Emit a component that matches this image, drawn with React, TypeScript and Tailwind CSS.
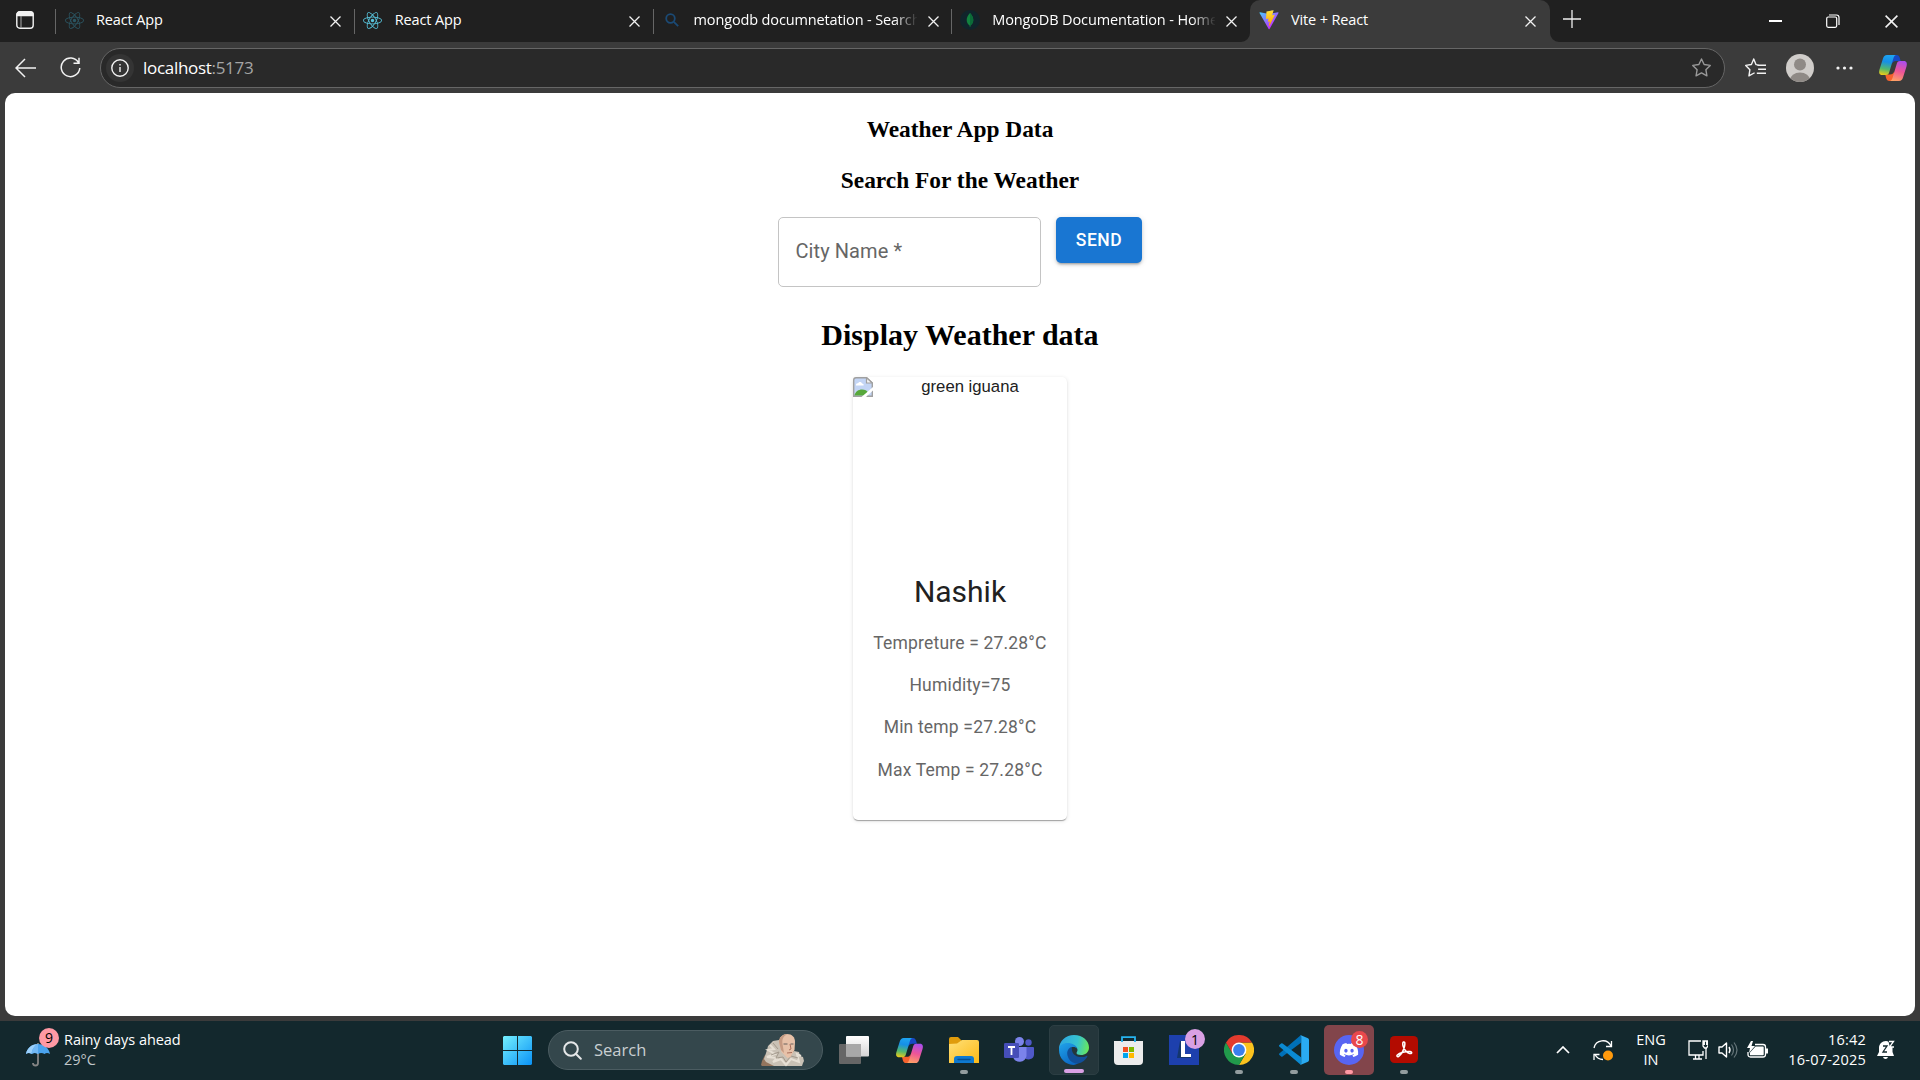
import React from "react";
import { FaDiscord, FaReact } from "react-icons/fa";

const ui = "font-['Open_Sans',sans-serif]";

function Cross({ size = 11 }: { size?: number }) {
  return (
    <svg width={size} height={size} viewBox="0 0 11 11" fill="none" stroke="#f2f2f2" strokeWidth="1.3">
      <path d="M.5.5l10 10M10.5.5l-10 10" />
    </svg>
  );
}

function SearchFavicon() {
  return (
    <svg width="16" height="16" viewBox="0 0 16 16" fill="none" stroke="#1b4a75" strokeWidth="1.8">
      <circle cx="6.5" cy="6.5" r="4.3" />
      <path d="M9.8 9.8l4.4 4.4" />
    </svg>
  );
}

function MongoFavicon() {
  return (
    <svg width="20" height="20" viewBox="0 0 20 20">
      <circle cx="10" cy="10" r="10" fill="#10242b" />
      <path d="M10 3c2.2 2.3 3.3 4.500 3.300 7 0 2.600-1.200 4.200-2.900 5.500L10.200 17h-.4l-.2-1.500C7.900 14.200 6.700 12.600 6.700 10 6.700 7.500 7.800 5.300 10 3z" fill="#12823f" />
      <path d="M10 3v14h.2l.2-1.500c1.700-1.300 2.900-2.900 2.900-5.500 0-2.500-1.100-4.700-3.300-7z" fill="#0b6b38" />
    </svg>
  );
}

function ViteFavicon() {
  return (
    <svg width="20" height="20" viewBox="0 0 410 404">
      <defs>
        <linearGradient id="va" x1="6" y1="33" x2="235" y2="344" gradientUnits="userSpaceOnUse">
          <stop stopColor="#41D1FF" />
          <stop offset="1" stopColor="#BD34FE" />
        </linearGradient>
        <linearGradient id="vb" x1="194" y1="9" x2="236" y2="293" gradientUnits="userSpaceOnUse">
          <stop stopColor="#FFEA83" />
          <stop offset=".08" stopColor="#FFDD35" />
          <stop offset="1" stopColor="#FFA800" />
        </linearGradient>
      </defs>
      <path d="M399.600 59.500L215.600 388.500c-3.800 6.800-13.600 6.800-17.400.1L10.600 59.600c-4.200-7.300 2.100-16.200 10.400-14.700l184.200 32.900c1.200.2 2.400.2 3.500 0l180.400-32.900c8.300-1.500 14.600 7.300 10.500 14.600z" fill="url(#va)" />
      <path d="M292.900 1.600L156.800 28.200c-2.200.4-3.900 2.300-4 4.600l-8.400 141.300c-.2 3.300 2.900 5.900 6.100 5.200l37.900-8.700c3.500-.8 6.700 2.300 6 5.900l-11.300 55.100c-.8 3.700 2.700 6.900 6.300 5.800l23.400-7.100c3.600-1.100 7.100 2.100 6.300 5.800l-17.900 86.600c-1.100 5.400 6.100 8.400 9.100 3.700l2-3.100 110.900-221.400c1.900-3.700-1.300-7.900-5.400-7.200l-39 7.500c-3.700.7-6.800-2.700-5.700-6.300l25.500-88.200c1-3.700-2-7.100-5.700-6.400z" fill="url(#vb)" />
    </svg>
  );
}

function Copilot({ id, size }: { id: string; size: number }) {
  return (
    <svg width={size} height={size} viewBox="0 0 30 30">
      <defs>
        <linearGradient id={id + "a"} x1="8" y1="1" x2="4" y2="22" gradientUnits="userSpaceOnUse">
          <stop stopColor="#1ea6f2" />
          <stop offset=".35" stopColor="#168fe8" />
          <stop offset=".7" stopColor="#54b96b" />
          <stop offset="1" stopColor="#f5cc14" />
        </linearGradient>
        <linearGradient id={id + "b"} x1="25" y1="8" x2="19" y2="29" gradientUnits="userSpaceOnUse">
          <stop stopColor="#a84df0" />
          <stop offset=".5" stopColor="#ee5597" />
          <stop offset="1" stopColor="#ffa463" />
        </linearGradient>
      </defs>
      <path d="M14 2h4.500c2 0 2.700 1.200 3.300 3l.9 3h-4.500c-2.400 0-3.700 1-4.400 3z" fill="#1748c4" />
      <path d="M16 28h-4.500c-2 0-2.800-1.200-3.400-3l-.9-3.500H12c2.200 0 3.500-1 4.200-3z" fill="#f5622d" />
      <path d="M9 2h9.300c-1.600.3-2.300 1.400-2.800 3l-4.200 14c-.5 1.700-1.300 3-3.300 3H4.300C1 22 .7 19.300 1.500 16.500L5 5.500C5.700 3.300 6.800 2 9 2z" fill={`url(#${id}a)`} />
      <path d="M21 28h-9.300c1.600-.3 2.300-1.400 2.800-3l4.200-14c.5-1.700 1.300-3 3.300-3h3.700c3.300 0 3.600 2.700 2.800 5.500L25 24.500c-.7 2.200-1.800 3.500-4 3.500z" fill={`url(#${id}b)`} />
    </svg>
  );
}

function Tab({ icon, title, active, divider }: { icon: React.ReactNode; title: string; active?: boolean; divider?: boolean }) {
  return (
    <div className={"relative flex h-[42px] shrink-0 items-center " + (active ? "w-[300px] rounded-t-[10px] bg-[#3b3b3b]" : "w-[298.750px]")}>
      {divider && <span className="absolute left-0 top-[9px] h-[25px] w-px bg-[#666]" />}
      {active && (
        <>
          <svg className="absolute -left-[9px] bottom-0" width="9" height="9"><path d="M9 0v9H0a9 9 0 0 0 9-9z" fill="#3b3b3b" /></svg>
          <svg className="absolute -right-[9px] bottom-0" width="9" height="9"><path d="M0 0v9h9a9 9 0 0 1-9-9z" fill="#3b3b3b" /></svg>
        </>
      )}
      <span className="ml-[9px] flex w-5 items-center justify-center pb-[2px]">{icon}</span>
      <span className={"ml-3 w-[223px] overflow-hidden whitespace-nowrap pb-[2px] text-[14.500px] leading-5 tracking-[-0.130px] text-white " + ui}
        style={title.length > 20 ? { maskImage: "linear-gradient(90deg,#000 200px,transparent 224px)" } : undefined}>
        {title}
      </span>
      <span className="ml-[11px] flex"><Cross /></span>
    </div>
  );
}

function Slot({ children, dot, tile }: { children: React.ReactNode; dot?: string; tile?: string }) {
  return (
    <div className="flex w-[55px] justify-center">
      <div className={"relative flex h-[50px] w-[50px] items-center justify-center rounded-[5px] " + (tile || "")}>
        {children}
        {dot && <span className={"absolute bottom-[1px] h-1 rounded-full " + dot} />}
      </div>
    </div>
  );
}

function WindowsLogo() {
  return (
    <svg width="29" height="29" viewBox="0 0 30 30">
      <defs>
        <linearGradient id="wn" x1="0" y1="0" x2="1" y2="1">
          <stop stopColor="#74f0ff" /><stop offset="1" stopColor="#0a92f5" />
        </linearGradient>
      </defs>
      <path d="M1 0h13.500v14.500H0V1zM15.500 0H29l1 1v13.500H15.500zM0 15.500h14.500V30H1l-1-1zM15.500 15.500H30V29l-1 1H15.500z" fill="url(#wn)" />
    </svg>
  );
}

function Portrait() {
  return (
    <svg width="44" height="34" viewBox="0 0 44 34">
      <path d="M0 32l1-4 3-6 8 2 4 9H1z" fill="#94755e" />
      <path d="M4 23l2-6 1-4 5-5 6-1 4 3 6 14 5-6 5 1 1 4 3 1 1 4-1 2-1 3H13L5 29l-2-3z" fill="#c9c1b5" />
      <path d="M9 12l4 4-6 1 7 4-8 3 10 1-4 4 8-3 5 6 5-6 8 3-2-8 4 2" fill="none" stroke="#e6dfd4" strokeWidth="2" />
      <path d="M10 22l8-3-3 6 7-1 3 5 5-6 7 2M12 10l5 6" fill="none" stroke="#a3998c" strokeWidth="1" />
      <path d="M18 9c0-5 4-8 8-8 5 0 8 3 8 8l-.5 8-4 7-3 1-6-6-1.500-5z" fill="#e7c1a8" />
      <path d="M18 9c0-5 4-8 9-8-5 2-6 5-5.500 10l1.500 9-3-3z" fill="#c59a82" />
      <path d="M22.500 11h4m3 0h3" stroke="#6b625c" strokeWidth="1.200" />
      <path d="M29 11l1 5-2 1M26 20l5-.5" stroke="#a96f5b" strokeWidth="1" fill="none" />
    </svg>
  );
}

function TaskView() {
  return (
    <svg width="30" height="28" viewBox="0 0 30 28">
      <defs><linearGradient id="tv" x1="0" y1="0" x2="0" y2="1"><stop stopColor="#fff" /><stop offset="1" stopColor="#d5d5d5" /></linearGradient></defs>
      <rect y="8" width="22" height="20" rx="1" fill="#666" />
      <rect x="7" width="23" height="20.500" rx="1" fill="url(#tv)" />
      <path d="M7 8h15v12.500H7z" fill="#a8a8a8" />
    </svg>
  );
}

function Explorer() {
  return (
    <svg width="30" height="27" viewBox="0 0 30 27">
      <defs><linearGradient id="fe" x1="0" y1="0" x2="1" y2="1"><stop stopColor="#ffe078" /><stop offset="1" stopColor="#fcb916" /></linearGradient></defs>
      <path d="M0 2Q0 0 2 0h7l4 4h-1v5H0z" fill="#e09c0c" />
      <path d="M0 7l8-.500L13 3h15q2 0 2 2v21H0z" fill="url(#fe)" />
      <path d="M5 26v-4q0-3 3-3h14q3 0 3 3v4z" fill="#0e79d0" />
      <path d="M9 22.500h12" stroke="#064f91" strokeWidth="1.300" strokeLinecap="round" />
    </svg>
  );
}

function Teams() {
  return (
    <svg width="30" height="27" viewBox="0 0 30 27">
      <circle cx="24.500" cy="5.500" r="3.200" fill="#5059c9" />
      <path d="M20 10h9q1 0 1 1v7a5.500 5.500 0 0 1-10 2z" fill="#5059c9" />
      <circle cx="15.500" cy="4.500" r="4.500" fill="#7b83eb" />
      <path d="M9 10h13.500v9a7 7 0 0 1-13.500 1z" fill="#7b83eb" />
      <rect y="6" width="15" height="15" rx="1.300" fill="#464eb8" />
      <path d="M4 10h7M7.500 10v8" stroke="#fff" strokeWidth="1.800" />
    </svg>
  );
}

function Edge() {
  return (
    <svg width="30" height="30" viewBox="0 0 30 30">
      <defs>
        <linearGradient id="eg1" x1="2" y1="8" x2="30" y2="14" gradientUnits="userSpaceOnUse"><stop stopColor="#2ea9e0" /><stop offset=".55" stopColor="#36c3d0" /><stop offset="1" stopColor="#6bea55" /></linearGradient>
        <linearGradient id="eg2" x1="2" y1="10" x2="14" y2="30" gradientUnits="userSpaceOnUse"><stop stopColor="#1e9de6" /><stop offset="1" stopColor="#0b65c2" /></linearGradient>
      </defs>
      <path d="M0 14C0 6 7 0 15 0c9 0 15 6 15 12.500 0 5-4 7.500-8 7.500-3 0-4.500-1-4.500-2 0-.8 1-1.300 1-3 0-2.500-2.500-5-6.500-5-5 0-10 2.500-12 4z" fill="url(#eg1)" />
      <path d="M0 15c0-5 4-7 8.500-7 5 0 9 2.500 9.800 6-1-1.500-2.500-2-4-2-3 0-4.500 2.500-4.500 5.500 0 6 5 10 10 10-1.500 1.500-3.500 2.500-5.500 2.500C6 29.500 0 23 0 15z" fill="url(#eg2)" />
      <path d="M12.500 12C8 14 7.500 18 9 22c1.700 4.500 6 7 10.500 6.500 4-.8 7-3.500 8.800-6.800.3-.7-.2-1-.8-.8-6 3-13.500 0-14.500-5.500-.2-1.300 0-2.500-.5-3.400z" fill="#124f99" />
    </svg>
  );
}

function Store() {
  return (
    <svg width="29" height="29" viewBox="0 0 29 29">
      <path d="M0 5h29v20q0 4-4 4H4q-4 0-4-4z" fill="#ececec" />
      <path d="M8 6V1.200h13V6" fill="none" stroke="#26b4ef" strokeWidth="1.800" />
      <path d="M9 11h5v5H9z" fill="#f25022" /><path d="M15 11h5v5h-5z" fill="#7fba00" />
      <path d="M9 17h5v5H9z" fill="#00a4ef" /><path d="M15 17h5v5h-5z" fill="#ffb900" />
    </svg>
  );
}

function Chrome() {
  return (
    <svg width="30" height="30" viewBox="0 0 30 30">
      <path d="M15 7.500h13A15 15 0 0 1 15 30l6.500-11z" fill="#fcc31e" />
      <path d="M2 7.500A15 15 0 0 0 15 30l6.500-11.200L15 15 8.500 18.700z" fill="#219a4b" />
      <path d="M15 7.500H28A15 15 0 0 0 2 7.500l6.500 11.300z" fill="#e33b2e" />
      <circle cx="15" cy="15" r="7.400" fill="#fff" />
      <circle cx="15" cy="15" r="5.900" fill="#3b7fed" />
    </svg>
  );
}

function VsCode() {
  return (
    <svg width="30" height="30" viewBox="0 0 30 30">
      <path d="M.3 18.400q-.7.900.1 1.600l1.700 1.500q.7.500 1.500 0L22 7.800V0z" fill="#0070b8" />
      <path d="M.3 11.600q-.7-.9.100-1.600l1.700-1.500q.7-.5 1.500 0L22 22.200V30z" fill="#0b8ad2" />
      <path d="M21.300 0L29 3.300q1 .5 1 1.600v20.200q0 1.100-1 1.600L21.300 30q.9-.6.900-2V2q0-1.400-.9-2z" fill="#2aabf2" />
    </svg>
  );
}

function Acrobat() {
  return (
    <svg width="28" height="27" viewBox="0 0 28 27">
      <rect width="28" height="27" rx="4.500" fill="#b30b00" />
      <path d="M13.500 6c1.500-.5 1.700 1.500 1 4.500-1 4-4 8.500-5.800 9.800-1.300.9-2.400 0-1.400-1.200 2-2.200 9-4 12.700-3.500 2.600.4 2.100 2.400-.4 1.800-2.700-.7-5.800-4.100-6.600-7.600-.4-2-.2-3.500.5-3.800z" fill="none" stroke="#fff" strokeWidth="1.500" />
    </svg>
  );
}

function Umbrella() {
  return (
    <svg width="24" height="25" viewBox="0 0 24 25">
      <path d="M12 1v20a2.500 2.500 0 0 1-5 0" fill="none" stroke="#858585" strokeWidth="1.800" />
      <path d="M0 12C1 6 6 2 12 2s11 4 12 10c-2-1.500-4-1.500-5.500 0-2-1.500-4.500-1.500-6.500 0-2-1.500-4.500-1.500-6.500 0-1.500-1.500-4-1.500-5.500 0z" fill="#4aa3ee" />
      <path d="M0 12C1 6 6 2 12 2c-4 2-6 6-6.500 10-1.500-1.500-4-1.500-5.500 0z" fill="#9bd0fb" />
      <path d="M12 2v10c-2-1.500-4.500-1.500-6.500 0C6 8 8 4 12 2z" fill="#71b8f5" />
    </svg>
  );
}

function BrokenImage() {
  return (
    <svg className="shrink-0" width="20" height="20" viewBox="0 0 20 20">
      <path d="M.7 3Q.700.700 3 .700h10.700L19.300 6v13.300H.7z" fill="#c3d5f5" stroke="#a0a0a0" strokeWidth="1.400" />
      <path d="M13.500.700V6h5.800z" fill="#f5f5f5" stroke="#a0a0a0" strokeWidth="1.200" />
      <path d="M3 8c0-1.500 1.500-2 2-1.500C5.500 4.500 8.500 4.500 9 6.500c1.500 0 2 1.500 1.500 2H3z" fill="#fff" />
      <path d="M1.400 18.600c1-4 4-6 7.600-6 3 0 5 1 6 3v3z" fill="#57a83b" />
      <path d="M8.500 20L20 10v3.500L13 20z" fill="#fff" />
    </svg>
  );
}

const stats = ["Tempreture = 27.28°C", "Humidity=75", "Min temp =27.28°C", "Max Temp = 27.28°C"];

export default function App() {
  return (
    <div className="flex h-[1080px] w-[1920px] flex-col overflow-hidden bg-[#3b3b3b]">
      <div className="flex h-[42px] shrink-0 bg-[#202020]">
        <div className="flex w-[55px] shrink-0 items-center pb-[2px] pl-4">
          <svg width="18" height="18" viewBox="0 0 18 18" fill="none" stroke="#f2f2f2" strokeWidth="1.400">
            <rect x=".8" y=".8" width="16.400" height="16.400" rx="3" />
            <path d="M1 4.500V3.500q0-2.500 2.500-2.500h11Q17 1 17 3.500v1z" fill="#f2f2f2" />
            <path d="M5 5v12" stroke="#aaa" strokeWidth="1" />
          </svg>
        </div>
        <Tab divider icon={<FaReact size={19} color="#2b5562" />} title="React App" />
        <Tab divider icon={<FaReact size={19} color="#58c4dc" />} title="React App" />
        <Tab divider icon={<SearchFavicon />} title="mongodb documnetation - Search" />
        <Tab divider icon={<MongoFavicon />} title="MongoDB Documentation - Home" />
        <Tab active icon={<ViteFavicon />} title="Vite + React" />
        <div className="ml-[13px] flex items-center pb-1">
          <svg width="18" height="18" stroke="#eee" strokeWidth="1.300"><path d="M9 0v18M0 9h18" /></svg>
        </div>
        <div className="ml-auto flex items-center">
          <span className="flex w-[58px] justify-center"><span className="h-[1.500px] w-[13px] bg-white" /></span>
          <span className="flex w-[58px] justify-center">
            <svg width="14" height="14" viewBox="0 0 14 14" fill="none" stroke="#fff" strokeWidth="1.200">
              <rect x=".7" y="3" width="10" height="10.300" rx="1.500" />
              <path d="M3 1h7.500Q13 1 13 3.500V11" />
            </svg>
          </span>
          <span className="flex w-[58px] justify-center"><Cross size={13} /></span>
        </div>
      </div>

      <div className="flex h-[51px] shrink-0 items-center">
        <svg className="ml-[14.500px]" width="21" height="20" viewBox="0 0 21 20" fill="none" stroke="#f2f2f2" strokeWidth="1.500">
          <path d="M21 10H1M10 1l-9 9 9 9" />
        </svg>
        <svg className="ml-[24px]" width="21" height="21" viewBox="0 0 21 21" fill="none" stroke="#f2f2f2" strokeWidth="1.500">
          <path d="M18.500 5.500A9.300 9.300 0 1 0 19.800 11M19 .8v5.400h-5.500" />
        </svg>
        <div className="ml-[19.500px] flex h-10 w-[1625px] items-center rounded-full border border-[#666] bg-[#292929]">
          <span className="ml-[5px] flex h-7 w-7 items-center justify-center rounded-full bg-[#343434]">
            <svg width="18" height="18" viewBox="0 0 18 18" fill="none" stroke="#f2f2f2" strokeWidth="1.400">
              <circle cx="9" cy="9" r="8.200" /><path d="M9 8v5M9 5v1.500" />
            </svg>
          </span>
          <span className={"ml-[9px] text-[17px] tracking-[-0.300px] text-white " + ui}>
            localhost<span className="text-[#a5a5a5]">:5173</span>
          </span>
          <svg className="ml-auto mr-[12.500px]" width="21" height="21" viewBox="0 0 24 24" fill="none" stroke="#999" strokeWidth="1.600" strokeLinejoin="round">
            <path d="M12 2.200l3 6.400 7 1-5 4.900 1.200 7-6.200-3.300-6.200 3.300 1.200-7-5-4.900 7-1z" />
          </svg>
        </div>
        <svg className="ml-[19.500px]" width="21" height="21" viewBox="0 0 24 24" fill="none" stroke="#f2f2f2" strokeWidth="1.600" strokeLinejoin="round">
          <path d="M15.500 9L12.500 8.700 10 2.200 7.300 8.600l-6.500 1 4.800 4.900-1.100 7L11 18M14 9.500h10M15 14h9M13.500 18.500H24" />
        </svg>
        <svg className="ml-[20.500px]" width="28" height="28" viewBox="0 0 28 28">
          <clipPath id="av"><circle cx="14" cy="14" r="14" /></clipPath>
          <g clipPath="url(#av)"><path d="M0 0h28v28H0z" fill="#d0cdca" /><circle cx="14" cy="10.500" r="6" fill="#8f8a86" /><ellipse cx="14" cy="26" rx="10" ry="7.500" fill="#8f8a86" /></g>
        </svg>
        <svg className="ml-[22px]" width="17" height="4"><g fill="#f2f2f2"><circle cx="2" cy="2" r="1.600" /><circle cx="8.500" cy="2" r="1.600" /><circle cx="15" cy="2" r="1.600" /></g></svg>
        <span className="ml-[25px]"><Copilot id="ct" size={30} /></span>
      </div>

      <main className="mx-[5px] flex h-[923px] shrink-0 flex-col items-center rounded-[10px] bg-white text-center text-black">
        <h3 className="mt-[23px] font-['Liberation_Serif',serif] text-[23.400px] font-bold leading-[27px]">Weather App Data</h3>
        <h3 className="mt-6 font-['Liberation_Serif',serif] text-[23.400px] font-bold leading-[27px]">Search For the Weather</h3>
        <div className="mt-[23px] flex items-start gap-[15px]">
          <div className="flex h-[70px] w-[263px] items-center rounded-[5px] border border-[#c4c4c4] pb-[2px] pl-[16.500px] font-[Roboto,sans-serif] text-[20px] tracking-[0.080px] text-[#666]">City Name *</div>
          <button className="h-[46px] w-[86px] rounded-[5px] bg-[#1976d2] font-[Roboto,sans-serif] text-[17.500px] font-medium tracking-[0.500px] text-white shadow-[0_3px_2px_-2px_rgba(0,0,0,.2),0_2px_3px_rgba(0,0,0,.14),0_1px_6px_rgba(0,0,0,.12)]">SEND</button>
        </div>
        <h2 className="mt-[31px] font-['Liberation_Serif',serif] text-[30px] font-bold leading-[34px]">Display Weather data</h2>
        <section className="mt-[25px] flex h-[443px] w-[214px] flex-col rounded-[5px] bg-white shadow-[0_2px_1px_-1px_rgba(0,0,0,.2),0_1px_1px_rgba(0,0,0,.14),0_1px_4px_rgba(0,0,0,.12)]">
          <div className="flex h-[175px]">
            <BrokenImage />
            <span className="flex-1 font-['Liberation_Sans',sans-serif] text-[16.700px] leading-[19px] text-[#212121]">green iguana</span>
          </div>
          <div className="pt-5 font-[Roboto,sans-serif]">
            <div className="text-[30px] leading-10 text-[#212121]">Nashik</div>
            <div className="mt-[18.700px] flex flex-col gap-[17.400px] text-[17.500px] leading-[25px] tracking-[0.180px] text-[#666]">
              {stats.map((s) => <p key={s}>{s}</p>)}
            </div>
          </div>
        </section>
      </main>

      <footer className={"mt-[5px] flex h-[59px] shrink-0 items-center bg-[#13282d] pb-px text-white " + ui}>
        <div className="flex w-[490px] items-center">
          <div className="relative ml-[26px] mt-2 h-[25px] w-6">
            <Umbrella />
            <span className="absolute -top-[14px] left-[13px] flex h-5 w-5 items-center justify-center rounded-full bg-[#ff99a4] text-[14px] text-black">9</span>
          </div>
          <div className="ml-[14px] text-[14.500px] leading-5 tracking-[-0.050px]">
            <div>Rainy days ahead</div>
            <div className="text-[#c0c7c9]">29°C</div>
          </div>
        </div>
        <Slot><WindowsLogo /></Slot>
        <div className="ml-[3px] mr-[3.500px] flex h-10 w-[275px] items-center rounded-full border border-[#4b5c61] bg-[#34474c]">
          <svg className="ml-[14px]" width="19" height="19" viewBox="0 0 19 19" fill="none" stroke="#e5e7e8" strokeWidth="2"><circle cx="8" cy="8" r="6.800" /><path d="M12.800 12.800l5 5" strokeLinecap="round" /></svg>
          <span className="ml-[12px] text-[16.500px] text-[#c9cfd1]">Search</span>
          <span className="ml-auto mr-[17px]"><Portrait /></span>
        </div>
        <Slot><TaskView /></Slot>
        <Slot><Copilot id="cb" size={29} /></Slot>
        <Slot dot="w-2 bg-[#939d9f]"><Explorer /></Slot>
        <Slot><Teams /></Slot>
        <Slot tile="border border-[#2c3e43] bg-[#24363b]" dot="w-5 bg-[#d9a0e4]"><Edge /></Slot>
        <Slot><span className="pr-px"><Store /></span></Slot>
        <Slot>
          <div className="relative flex h-[30px] w-[30px] items-center justify-center bg-[#1d40ad]">
            <svg width="30" height="30"><path d="M11 6h5v13h6v4H8z" fill="#14366e" /><path d="M12 6h4v13h6v3H12z" fill="#fff" /></svg>
            <span className="absolute -top-[6px] left-4 flex h-5 w-5 items-center justify-center rounded-full bg-[#d9a0e4] text-[14px] text-black">1</span>
          </div>
        </Slot>
        <Slot dot="w-2 bg-[#939d9f]"><Chrome /></Slot>
        <Slot dot="w-2 bg-[#939d9f]"><VsCode /></Slot>
        <Slot tile="bg-[#82454b]" dot="w-2 bg-[#ff99a4]">
          <div className="relative flex h-[30px] w-[30px] items-center justify-center rounded-full bg-[#5865f2]">
            <FaDiscord size={20} />
            <span className="absolute -top-[4px] left-[17px] flex h-[17px] w-[17px] items-center justify-center rounded-full bg-[#e9484c] text-[14px]">8</span>
          </div>
        </Slot>
        <Slot dot="w-2 bg-[#939d9f]"><span className="pb-[2px]"><Acrobat /></span></Slot>

        <div className="ml-auto flex items-center">
          <svg width="14" height="8" fill="none" stroke="#fff" strokeWidth="1.700"><path d="M1 7l6-6 6 6" /></svg>
          <svg className="ml-[23px]" width="20" height="21" viewBox="0 0 20 21" fill="none" stroke="#fff" strokeWidth="1.300">
            <path d="M1 8a9 9 0 0 1 17-2M18.500 1v5.500H13M10 19.500A9 9 0 0 1 2 14.500M1 20v-5.500h5.500" />
            <circle cx="15" cy="15.500" r="5" fill="#ff9a0d" stroke="none" />
          </svg>
          <div className="ml-[18px] w-[40px] text-center text-[14.500px] leading-5"><div>ENG</div><div>IN</div></div>
          <svg className="ml-[17px]" width="20" height="20" viewBox="0 0 20 20" fill="none" stroke="#fff" strokeWidth="1.300">
            <path d="M13 1H1v14h14v-4M5 19h9M7.500 15v4M11 15v4M18 8v11M15 1h5v5l-1.500 2h-2L15 6zM16.300 1v4M18.700 1v4" />
          </svg>
          <svg className="ml-[10px]" width="20" height="18" viewBox="0 0 20 18" fill="none" stroke="#fff" strokeWidth="1.400" strokeLinejoin="round">
            <path d="M1 6h3l4.500-4v14L4 12H1zM11 6q2 3 0 6" /><path d="M13.500 3.500q4 5.500 0 11M16 1.500q6 7.500 0 15" stroke="#66767a" strokeWidth="1.200" />
          </svg>
          <svg className="ml-[9px]" width="21" height="18" viewBox="0 0 21 18">
            <path d="M8 3.500h8q2.500 0 2.500 2.500v7.500q0 2.500-2.500 2.500H3.500Q1 16 1 13.500V11" fill="none" stroke="#fff" strokeWidth="1.300" />
            <path d="M19 7.500h2v5h-2zM8.500 5.500H16q.7 0 .7.700v7.300q0 .7-.7.700H3v-2.700z" fill="#fff" /><path d="M4 0L0 7h3l-1 5 6-7H4.500L6 0z" fill="#fff" />
          </svg>
          <div className="ml-[19px] flex w-[79px] flex-col items-end whitespace-nowrap text-[14.500px] leading-5 tracking-[0.200px]"><div>16:42</div><div>16-07-2025</div></div>
          <svg className="ml-[11px] mr-[25px]" width="18" height="20" viewBox="0 0 18 20">
            <path d="M9 1C5 1 2 4 2 8v4L0 16h17l-1.500-4V8C15 4 12.500 1 9 1zM6 17a2.600 2.600 0 0 0 5 0z" fill="#fff" />
            <path d="M6 6h4l-4 6h4" fill="none" stroke="#13282d" strokeWidth="1.300" />
            <path d="M11 0h7v7h-5z" fill="#13282d" /><path d="M12 1.500h4.500L12.500 7H17" fill="none" stroke="#fff" strokeWidth="1.300" />
          </svg>
        </div>
      </footer>
    </div>
  );
}
